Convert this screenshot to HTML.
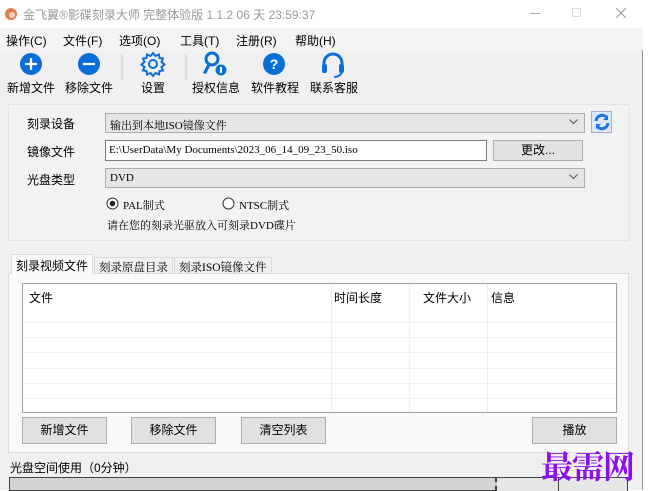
<!DOCTYPE html>
<html><head><meta charset="utf-8"><style>
*{margin:0;padding:0;box-sizing:border-box}
body{width:654px;height:490px;background:#fff;position:relative;overflow:hidden;font-family:"Liberation Sans","Noto Sans CJK SC",sans-serif;font-size:12px;color:#000}
.a{position:absolute}
.win{left:0;top:0;width:643px;height:490px;background:#f0f0f0;border-right:1px solid #999}
.cb{background:#e5e5e5;border:1px solid #adadad}
.btn{background:#e1e1e1;border:1px solid #adadad;text-align:center;line-height:25px}
.t{white-space:nowrap}
.mono{font-family:"Liberation Serif","Noto Serif CJK SC",serif;font-size:11px}
.chev{position:absolute;right:6px;top:5px}
.hl{position:absolute;left:1px;right:1px;height:1px;background:#f0f0f0}
</style></head><body>
<div class="a win"></div>
<!-- title -->
<div class="a" style="left:0;top:0;width:643px;height:28px;background:#fff"></div>
<svg class="a" style="left:3px;top:5px" width="16" height="16"><circle cx="8" cy="9" r="6" fill="#e57a4a"/><circle cx="9" cy="10" r="3" fill="#fbd9c5"/></svg>
<div class="a t" style="left:23px;top:6px;color:#999;font-size:12px">金飞翼®影碟刻录大师 完整体验版 1.1.2 06 天 23:59:37</div>
<div class="a" style="left:530px;top:13px;width:10px;height:1px;background:#aaa"></div>
<div class="a" style="left:572px;top:8px;width:9px;height:9px;border:1px solid #ddd"></div>
<svg class="a" style="left:616px;top:8px" width="10" height="10"><path d="M0 0L10 10M10 0L0 10" stroke="#999" stroke-width="1"/></svg>
<!-- menu -->
<div class="a" style="left:0;top:28px;width:643px;height:22px;background:#f3f3f3"></div>
<div class="a t" style="left:6px;top:32px">操作(C)</div>
<div class="a t" style="left:63px;top:32px">文件(F)</div>
<div class="a t" style="left:119px;top:32px">选项(O)</div>
<div class="a t" style="left:180px;top:32px">工具(T)</div>
<div class="a t" style="left:236px;top:32px">注册(R)</div>
<div class="a t" style="left:295px;top:32px">帮助(H)</div>
<!-- toolbar -->
<svg class="a" style="left:0;top:50px" width="370" height="30">
<circle cx="31" cy="14" r="11" fill="#0a6ed8"/><path d="M31 8v12M25 14h12" stroke="#fff" stroke-width="2.2"/>
<circle cx="89" cy="14" r="11" fill="#0a6ed8"/><path d="M83 14h12" stroke="#fff" stroke-width="2.2"/>
<line x1="122" y1="4" x2="122" y2="42" stroke="#ccc"/>
<g transform="translate(153 14)" fill="none" stroke="#0a6ed8" stroke-width="2"><circle r="4"/><path d="M0-11l2.5 3 3.5-1.5 0.5 3.5 3.5 0.5-1.5 3.5 3 2.5-3 2.5 1.5 3.5-3.5 0.5-0.5 3.5-3.5-1.5-2.5 3-2.5-3-3.5 1.5-0.5-3.5-3.5-0.5 1.5-3.5-3-2.5 3-2.5-1.5-3.5 3.5-0.5 0.5-3.5 3.5 1.5z"/></g>
<line x1="186" y1="4" x2="186" y2="42" stroke="#ccc"/>
<g fill="#0a6ed8"><circle cx="212" cy="9" r="6" fill="none" stroke="#0a6ed8" stroke-width="3"/><path d="M208 13l-5 10 3 1 5-10z"/><circle cx="221" cy="20" r="5.5"/></g><path d="M221 17v6" stroke="#fff" stroke-width="2"/>
<circle cx="274" cy="14" r="11" fill="#0a6ed8"/><text x="274" y="19" fill="#fff" font-size="14" font-weight="bold" text-anchor="middle" font-family="Liberation Sans">?</text>
<path d="M324 19v-6a9 9 0 0 1 18 0v6" fill="none" stroke="#0a6ed8" stroke-width="3"/><rect x="322" y="14" width="5" height="9" rx="2" fill="#0a6ed8"/><rect x="339" y="14" width="5" height="9" rx="2" fill="#0a6ed8"/><path d="M342 22q-2 5-8 5" fill="none" stroke="#0a6ed8" stroke-width="2"/>
</svg>
<div class="a t" style="left:7px;top:79px">新增文件</div>
<div class="a t" style="left:65px;top:79px">移除文件</div>
<div class="a t" style="left:141px;top:79px">设置</div>
<div class="a t" style="left:192px;top:79px">授权信息</div>
<div class="a t" style="left:251px;top:79px">软件教程</div>
<div class="a t" style="left:310px;top:79px">联系客服</div>
<!-- group panel -->
<div class="a" style="left:8px;top:104px;width:621px;height:137px;background:#f2f2f2;border:1px solid #e3e3e3"></div>
<div class="a t" style="left:27px;top:115px">刻录设备</div>
<div class="a cb mono" style="left:105px;top:113px;width:480px;height:20px;padding:3px 4px">输出到本地ISO镜像文件<svg class="chev" width="9" height="6"><path d="M0.5 0.5L4.5 4.5 8.5 0.5" fill="none" stroke="#555"/></svg></div>
<div class="a" style="left:591px;top:111px;width:21px;height:22px;background:#dce8f6;border:1px solid #aac"></div>
<svg class="a" style="left:593px;top:113px" width="18" height="18"><path d="M3 8a6 6 0 0 1 11-3M15 10a6 6 0 0 1-11 3" fill="none" stroke="#1a73e8" stroke-width="3"/><path d="M15 2v5h-5zM3 16v-5h5z" fill="#1a73e8"/></svg>
<div class="a t" style="left:27px;top:143px">镜像文件</div>
<div class="a mono" style="left:105px;top:140px;width:382px;height:21px;background:#fff;border:1px solid #7a7a7a;padding:3px 3px">E:\UserData\My Documents\2023_06_14_09_23_50.iso</div>
<div class="a btn" style="left:493px;top:140px;width:90px;height:21px;line-height:19px">更改...</div>
<div class="a t" style="left:27px;top:171px">光盘类型</div>
<div class="a cb mono" style="left:105px;top:168px;width:480px;height:20px;padding:3px 4px">DVD<svg class="chev" width="9" height="6"><path d="M0.5 0.5L4.5 4.5 8.5 0.5" fill="none" stroke="#555"/></svg></div>
<svg class="a" style="left:106px;top:197px" width="14" height="14"><circle cx="6.5" cy="6.5" r="5.5" fill="#fff" stroke="#333"/><circle cx="6.5" cy="6.5" r="2.8" fill="#222"/></svg>
<div class="a t mono" style="left:123px;top:197px">PAL制式</div>
<svg class="a" style="left:222px;top:197px" width="14" height="14"><circle cx="6.5" cy="6.5" r="5.5" fill="#fff" stroke="#333"/></svg>
<div class="a t mono" style="left:239px;top:197px">NTSC制式</div>
<div class="a t mono" style="left:107px;top:217px">请在您的刻录光驱放入可刻录DVD碟片</div>
<!-- tabs -->
<div class="a" style="left:8px;top:273px;width:621px;height:180px;background:#f9f9f9;border:1px solid #dcdcdc"></div>
<div class="a t" style="left:11px;top:254px;width:82px;height:20px;background:#f9f9f9;border:1px solid #dcdcdc;border-bottom:none;padding:2px 4px">刻录视频文件</div>
<div class="a t mono" style="left:94px;top:257px;width:79px;height:17px;border:1px solid #dcdcdc;border-bottom:none;padding:1px 4px;font-size:11.5px">刻录原盘目录</div>
<div class="a t mono" style="left:174px;top:257px;width:98px;height:17px;border:1px solid #dcdcdc;border-bottom:none;padding:1px 4px;font-size:11.5px">刻录ISO镜像文件</div>
<div class="a" style="left:22px;top:283px;width:595px;height:130px;background:#fff;border:1px solid #a0a0a0">
<div class="hl" style="top:38px"></div><div class="hl" style="top:53px"></div><div class="hl" style="top:68px"></div><div class="hl" style="top:84px"></div><div class="hl" style="top:99px"></div><div class="hl" style="top:114px"></div>
<div class="a" style="left:308px;top:0;width:1px;height:128px;background:#eee"></div>
<div class="a" style="left:386px;top:0;width:1px;height:128px;background:#eee"></div>
<div class="a" style="left:464px;top:0;width:1px;height:128px;background:#eee"></div>
</div>
<div class="a t" style="left:29px;top:289px">文件</div>
<div class="a t" style="left:334px;top:289px">时间长度</div>
<div class="a t" style="left:423px;top:289px">文件大小</div>
<div class="a t" style="left:491px;top:289px">信息</div>
<div class="a btn" style="left:22px;top:417px;width:85px;height:27px">新增文件</div>
<div class="a btn" style="left:131px;top:417px;width:85px;height:27px">移除文件</div>
<div class="a btn" style="left:241px;top:417px;width:85px;height:27px">清空列表</div>
<div class="a btn" style="left:532px;top:417px;width:85px;height:27px">播放</div>
<div class="a t" style="left:10px;top:459px">光盘空间使用（0分钟）</div>
<div class="a" style="left:9px;top:477px;width:492px;height:14px;background:#d4d4d4;border:1px solid #444;border-right:none"></div>
<div class="a" style="left:495px;top:477px;width:0;height:14px;border-left:2px dashed #444"></div>
<div class="a" style="left:497px;top:477px;width:61px;height:14px;background:#e6e6e6;border-top:1px solid #444"></div>
<div class="a" style="left:558px;top:477px;width:70px;height:14px;background:#e6e6e6;border:1px solid #444;border-bottom:none"></div>
<div class="a t" style="left:541px;top:442px;color:#8a10f0;font-size:32px;font-family:'Noto Serif CJK SC',serif;font-weight:bold;letter-spacing:-1px">最需网</div>
</body></html>
